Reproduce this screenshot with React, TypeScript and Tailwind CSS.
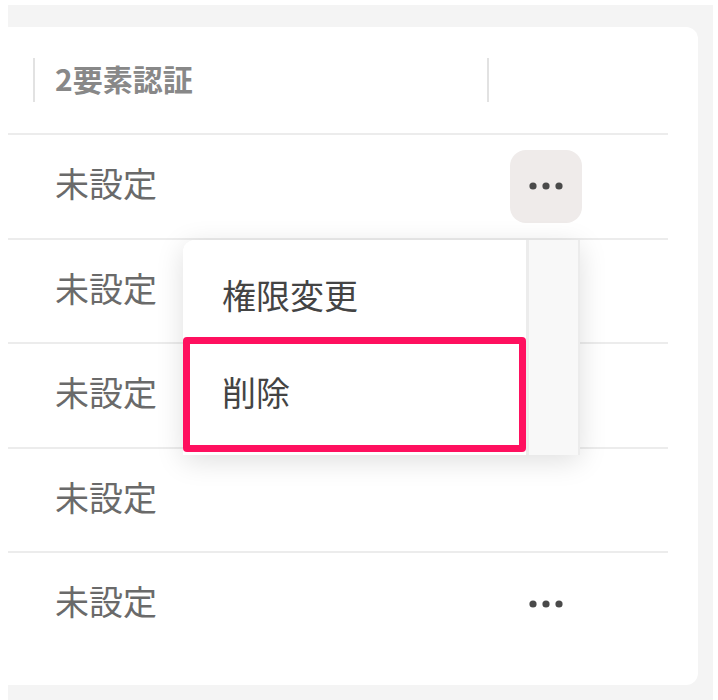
import React from "react";

const Dots = () => (
  <svg width="42" height="10" viewBox="0 0 42 10">
    <circle cx="8" cy="5" r="3.6" fill="#4a4a4a" />
    <circle cx="21" cy="5" r="3.6" fill="#4a4a4a" />
    <circle cx="34" cy="5" r="3.6" fill="#4a4a4a" />
  </svg>
);

const rows = [0, 1, 2, 3, 4];

export default function App() {
  return (
    <div
      className="w-[718px] h-[700px] bg-white pl-[8px] pt-[5px] overflow-hidden"
      style={{ fontFamily: '"Noto Sans CJK JP", "Noto Sans", sans-serif' }}
    >
      <div className="w-[705px] h-[695px] bg-[#f4f4f4] pt-[22px]">
        <div className="relative w-[690px] h-[658px] bg-white rounded-r-[12px] pr-[30px]">
          {/* header */}
          <div className="h-[106px] flex items-center">
            <div className="w-[479px] flex items-center pl-[25px]">
              <div className="w-[2px] h-[44px] bg-[#e2e2e2]" />
              <div className="pl-[20px] pb-[5px] text-[30px] font-bold text-[#888888] leading-none">2要素認証</div>
            </div>
            <div className="w-[2px] h-[44px] bg-[#e2e2e2]" />
          </div>
          {rows.map((i) => (
            <div key={i} className="h-[104.5px] border-t-2 border-[#ececec] flex items-center">
              <div className="w-[479px] pl-[47px] pb-[6px] text-[34px] text-[#6a6a6a] leading-none">未設定</div>
              <div className="pl-[23px] flex items-center">
                {i === 0 ? (
                  <div className="w-[72px] h-[73px] rounded-[16px] bg-[#efebea] flex items-center justify-center">
                    <Dots />
                  </div>
                ) : i === 4 ? (
                  <div className="w-[72px] h-[73px] flex items-center justify-center">
                    <Dots />
                  </div>
                ) : null}
              </div>
            </div>
          ))}

          {/* dropdown menu */}
          <div className="absolute left-[175px] top-[213px] flex shadow-[0_6px_28px_rgba(0,0,0,0.13)] rounded-tl-[12px]">
            <div className="w-[343px] h-[215px] bg-white rounded-tl-[12px] flex flex-col">
              <div className="h-[97px] flex items-center pl-[39px] pt-[12px] text-[34px] text-[#444444] leading-none">権限変更</div>
              <div className="h-[115px] border-[7px] border-[#ff105f] rounded-[4px] flex items-center pl-[32px] pb-[6px] text-[34px] text-[#444444] leading-none">削除</div>
            </div>
            <div className="w-[54px] h-[215px] bg-[#f8f8f8] border-l-[3px] border-r-[2px] border-[#ececec]" />
          </div>
        </div>
      </div>
    </div>
  );
}
